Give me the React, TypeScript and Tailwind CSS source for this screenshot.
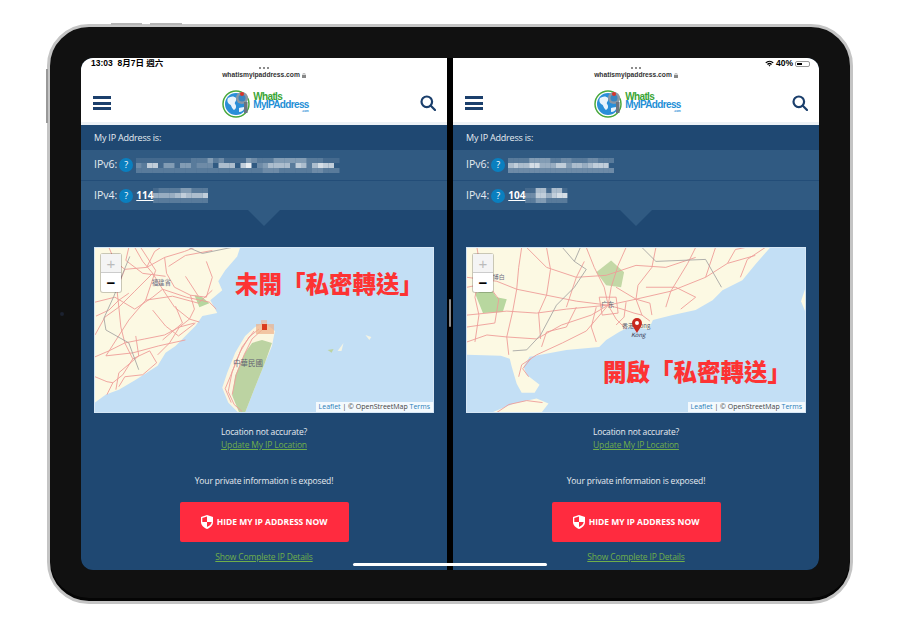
const CJK = '"Noto Sans CJK TC", "Noto Sans", sans-serif'

const LEFT_ROADS = [
  '0,55 20,50 40,62 58,50 68,42 92,50 115,55 122,62',
  '40,0 48,14 58,26 68,42 80,60 95,72 105,75',
  '14,0 20,14 30,22 52,20 70,10 90,4 100,0',
  '0,110 14,104 30,96 50,92 70,88 85,80 100,76',
  '30,22 22,42 24,60 26,80 30,96 38,112 55,104',
  '70,10 72,26 80,40 96,48 112,50',
  '58,26 40,44 24,60 10,70 0,88',
  '38,112 28,128 18,136 12,148',
  '55,104 62,116 48,128 30,130 24,140',
  '96,48 100,62 95,72 85,80 75,96 63,108',
  '0,130 12,135 18,136',
  '112,14 118,30 112,50',
  '52,20 60,4 66,0',
  '46,0 61,23 51,53 34,73 11,109',
  '74,19 91,8 118,3',
  '51,53 78,49 104,56 118,43',
  '11,109 38,106 64,99 91,93',
  '41,89 44,109 24,126 21,143',
  '58,63 71,79 84,89 101,76',
  '81,59 88,76 68,93',
  '1,69 14,63 24,53 34,46',
  '34,0 31,13 48,26 71,29',
  '91,29 104,49',
  '165,82 155,90 146,105 138,125 134,145 140,158 148,165',
  '169,82 158,92 150,108 142,128 138,148',
  '160,84 148,100 136,130 131,142 137,156',
]

const RIGHT_ROADS = [
  '0,30 30,34 50,42 80,48 110,54 142,58 170,52 205,44 240,30 262,16 290,8',
  '0,68 40,64 70,66 100,62 142,58',
  '55,0 52,20 50,42 46,64 40,90 42,108',
  '120,0 128,20 138,40 142,58 150,72 160,82',
  '160,0 152,18 145,40 142,58',
  '190,0 186,20 172,38 170,52 176,68 184,74',
  '230,0 222,16 205,44 200,60',
  '0,95 20,88 40,90 70,92 95,78 125,68 142,58',
  '142,58 120,84 96,96 70,108 55,118 52,130',
  '10,0 14,24 8,50 12,68 8,95',
  '80,0 84,22 80,48 72,66 74,92',
  '262,16 270,2 280,0',
  '150,40 170,52 184,56 186,68',
  '142,58 156,62 168,66 176,68',
  '30,166 42,158 60,154 76,156',
  '62,130 56,122 64,112',
  '100,60 110,30 118,14',
  '60,0 80,20 110,30 140,28 170,18 200,20 230,10',
  '0,40 20,36 32,52 28,76 0,80',
  '110,60 100,80 80,85 75,100',
  '130,60 125,80 130,95',
  '160,55 158,70 150,78',
  '180,40 210,40 230,50 215,62',
  '250,0 240,30',
  '300,0 282,12 275,30',
  '133,50 150,50 152,66 136,68 133,50',
]

const LEFT_MASK = [
  '1111111111222423111143222444444222111',
  '3277144144233306660790346666276268770',
  '2222222222222222222222233322222233222',
]
const RIGHT_MASK = [
  '22224444223322233222',
  '67668855577466567770',
  '33333333333333333333',
]
const V4_LEFT = ['1222244222', '5555676667', '2222222222']
const V4_RIGHT = ['11661661', '33775788', '22442222']

function Mask({ rows, cell }: { rows: string[]; cell: number }) {
  return (
    <svg width={rows[0].length * cell} height={15} className="block blur-[0.4px]">
      {rows.map((row, y) =>
        row.split('').map((v, x) => (
          <rect key={`${x}-${y}`} x={x * cell} y={y * 5} width={cell} height={5} fill="#fff" opacity={Number(v) / 10} />
        )),
      )}
    </svg>
  )
}

function Roads({ roads }: { roads: string[] }) {
  return (
    <g fill="none" stroke="#ee9d98" strokeWidth="0.9">
      {roads.map((r) => (
        <polyline key={r} points={r} />
      ))}
    </g>
  )
}

function TaiwanMap() {
  return (
    <svg viewBox="0 0 340 166" preserveAspectRatio="xMidYMid slice" className="block h-full w-full">
      <rect width="340" height="166" fill="#c3dff5" />
      <polygon points="0,0 146,0 143,9 131,23 124,34 128,43 116,53 123,66 108,69 101,79 91,89 81,99 71,106 63,119 41,133 24,143 11,148 0,156" fill="#fcf9e3" />
      <polygon points="171,76 181,84 178,99 171,116 164,133 151,166 144,166 134,156 128,141 133,126 141,106 151,89 161,80" fill="#fbf6e0" />
      <polygon points="168,93 178,96 171,116 164,133 151,166 145,166 138,149 141,129 151,106 158,96" fill="#bcd3a2" />
      <polygon points="100,48 108,50 115,56 105,60" fill="#b7d7a0" />
      <polygon points="234,103 240,102 238,106" fill="#bcd3a2" />
      <polygon points="244,104 250,96 248,104" fill="#f4f4e4" />
      <polygon points="272,88 278,90 276,93" fill="#f4f4e4" />
      <Roads roads={LEFT_ROADS} />
      <polyline points="35,9 28,26 19,49 9,71 11,83 34,96 44,123" fill="none" stroke="#9d9d9d" strokeWidth="0.8" />
      <polyline points="94,0 108,6 137,0" fill="none" stroke="#9d9d9d" strokeWidth="0.8" />
      <rect x="162" y="77" width="18" height="10" fill="#eeb189" opacity="0.7" />
      <rect x="167" y="73" width="6" height="5" fill="#e9b9a0" opacity="0.7" />
      <rect x="168" y="77" width="5" height="6" fill="#db3a1e" />
      <text x="57" y="38" fontSize="6.5" fill="#6b6b80" fontFamily={CJK}>福建省</text>
      <text x="139" y="119" fontSize="7.5" fill="#5f5f70" fontFamily={CJK}>中華民國</text>
    </svg>
  )
}

function HongKongMap() {
  return (
    <svg viewBox="0 0 340 166" preserveAspectRatio="xMidYMid slice" className="block h-full w-full">
      <rect width="340" height="166" fill="#c3dff5" />
      <polygon points="0,0 305,0 290,17 277,33 257,43 247,53 230,63 207,68 187,73 183,82 163,80 153,85 140,93 133,100 100,103 63,110 57,120 60,128 73,138 68,146 55,146 50,137 45,120 43,112 34,109 0,108" fill="#fcf9e3" />
      <polygon points="25,166 47,157 70,152 82,157 75,166" fill="#fcf9e3" />
      <polygon points="340,42 336,54 340,64" fill="#fcf9e3" />
      <polygon points="130,25 145,13 158,25 155,40 140,38" fill="#c3d8a6" />
      <polygon points="8,46 24,42 30,50 40,52 36,65 16,66" fill="#b8d79f" />
      <Roads roads={RIGHT_ROADS} />
      <polyline points="96,0 108,14 114,0" fill="none" stroke="#9d9d9d" strokeWidth="0.8" />
      <polyline points="108,14 120,22 108,40 90,58 74,88 60,103 46,104" fill="none" stroke="#9d9d9d" strokeWidth="0.8" />
      <polyline points="176,0 190,14 240,12 256,40" fill="none" stroke="#9d9d9d" strokeWidth="0.8" />
      <text x="135" y="60" fontSize="6.5" fill="#5f5f70" fontFamily={CJK}>广东</text>
      <text x="156" y="81" fontSize="6" fill="#55556a" fontFamily={CJK}>香港 Hong</text>
      <text x="165" y="90" fontSize="6" fontStyle="italic" fill="#333350" fontFamily={CJK}>Kong</text>
      <text x="26" y="32" fontSize="6" fill="#6b6b80" fontFamily={CJK}>博白</text>
      <path d="M171 86c-3-5-5-7-5-10a5 5 0 0 1 10 0c0 3-2 5-5 10z" fill="#c8281e" />
      <circle cx="171" cy="76" r="2" fill="#fff" />
    </svg>
  )
}

function Logo() {
  return (
    <div className="flex h-[29px] items-center gap-[2px]">
      <svg width="29" height="29" viewBox="0 0 29 29">
        <circle cx="14" cy="15" r="13" fill="#fff" stroke="#4aa83c" strokeWidth="1.5" />
        <circle cx="14" cy="15" r="11" fill="#2a8fd8" />
        <path d="M6 9c3-2 6-2 8 0 1 3-2 4-1 6 2 2 1 5-1 6-3-2-2-5-5-6-2-2-2-4-1-6zM17 19c3-1 5-1 6-1-1 3-3 5-6 5z" fill="#e8f3fb" />
        <circle cx="20" cy="9" r="6" fill="#8a97a5" />
        <circle cx="20" cy="9" r="3.500" fill="#3a86c0" />
        <rect x="22" y="13" width="3.500" height="11" fill="#6b7480" />
        <circle cx="20" cy="5" r="2" fill="#d8352a" />
      </svg>
      <div className="flex flex-col font-['Liberation_Sans'] text-[10px] font-bold leading-[8px] tracking-[-0.65px]">
        <span className="text-[#3aa535]">WhatIs</span>
        <span className="text-[#1f8fd6]">MyIPAddress</span>
        <span className="self-end text-[3px] leading-[4px] tracking-normal text-[#1f8fd6]">.com</span>
      </div>
    </div>
  )
}

function Shield() {
  return (
    <svg width="12" height="14" viewBox="0 0 12 14">
      <path d="M6 0 12 2v5c0 3.400-2.600 5.700-6 7-3.400-1.300-6-3.600-6-7V2z" fill="#fff" />
      <path d="M6 1.500v5.500H1.300V3zM6 7h4.700c-.3 2.300-2.200 3.900-4.700 5z" fill="#ff2b3f" />
    </svg>
  )
}

interface PaneProps {
  ip: string
  v6: string[]
  v4: string[]
  cell: number
  left?: boolean
  note: string
  noteClass: string
  map: React.ReactNode
}

function Pane({ ip, v6, v4, cell, left, note, noteClass, map }: PaneProps) {
  return (
    <div className="flex h-full flex-1 flex-col bg-[#1f4872] font-['Open_Sans'] text-[#e6ebf1]">
      <div className="bg-white">
        <div className="relative h-[26px] text-black">
          <div className="flex h-[10px] items-center justify-center gap-[2px] pt-[9px]">
            <span className="h-[2px] w-[2px] rounded-full bg-[#666]" />
            <span className="h-[2px] w-[2px] rounded-full bg-[#666]" />
            <span className="h-[2px] w-[2px] rounded-full bg-[#666]" />
          </div>
          <div className="mt-[2px] flex items-center justify-center gap-[2px] font-['Liberation_Sans'] text-[6.700px] font-bold leading-[10px] text-[#333]">
            whatismyipaddress.com
            <svg width="4" height="5" viewBox="0 0 4 5"><rect y="2" width="4" height="3" fill="#888" /><path d="M1 2V1a1 1 0 0 1 2 0v1" fill="none" stroke="#888" strokeWidth="0.6" /></svg>
          </div>
          {left ? (
            <span className="absolute left-[10px] top-0 text-[8.500px] font-bold leading-[11px]" style={{ fontFamily: `"Liberation Sans", ${CJK}` }}>
              13:03&nbsp;&nbsp;8月7日 週六
            </span>
          ) : (
            <div className="absolute right-[9px] top-0 flex h-[11px] items-center gap-[2px] font-['Liberation_Sans'] text-[8.500px] font-bold">
              <svg width="9" height="7" viewBox="0 0 9 7">
                <path d="M.3 2.400a6 6 0 0 1 8.400 0l-.9.9a4.800 4.800 0 0 0-6.600 0zM2 4a3.600 3.600 0 0 1 5 0l-.9.9a2.300 2.300 0 0 0-3.200 0zM3.500 5.400a1.400 1.400 0 0 1 2 0l-1 1.100z" fill="#000" />
              </svg>
              40%
              <div className="flex h-[6px] w-[15px] items-center rounded-[2px] border border-[#999] p-[1px]">
                <div className="h-full w-[5px] bg-black" />
              </div>
            </div>
          )}
        </div>
        <div className="flex h-[38px] items-center justify-between pl-[12px] pr-[11px]">
          <div className="flex w-[18px] flex-col gap-[2.500px]">
            <div className="h-[3px] bg-[#1b3f6c]" />
            <div className="h-[3px] bg-[#1b3f6c]" />
            <div className="h-[3px] bg-[#1b3f6c]" />
          </div>
          <Logo />
          <svg width="16" height="16" viewBox="0 0 16 16" fill="none" stroke="#1b3f6c" strokeWidth="2.200">
            <circle cx="6.800" cy="6.800" r="5.300" />
            <path d="m10.800 10.800 4.200 4.200" strokeLinecap="round" />
          </svg>
        </div>
        <div className="h-[3px] bg-[#eef2f6]" />
      </div>
      <div className="flex h-[25px] items-center px-[13px] text-[9px] tracking-[-0.2px]">My IP Address is:</div>
      <div className="flex h-[31px] items-center border-b border-[#234d78] bg-[#305a82] px-[13px] text-[10.500px]">
        <span>IPv6:</span>
        <span className="ml-[2px] flex h-[14px] w-[14px] items-center justify-center rounded-full bg-[#0a7fbf] text-[9px] text-white">?</span>
        <div className="ml-[3px]">
          <Mask rows={v6} cell={cell} />
        </div>
      </div>
      <div className="flex h-[29px] items-center bg-[#305a82] px-[13px] text-[10.500px]">
        <span>IPv4:</span>
        <span className="ml-[2px] flex h-[14px] w-[14px] items-center justify-center rounded-full bg-[#0a7fbf] text-[9px] text-white">?</span>
        <span className="ml-[3px] text-[10px] font-bold text-white underline">{ip}</span>
        <Mask rows={v4} cell={cell} />
      </div>
      <div className="mx-auto h-0 w-0 border-x-[16px] border-t-[16px] border-x-transparent border-t-[#305a82]" />
      <div className="relative mx-[13px] mt-[21px] h-[166px] overflow-hidden border border-[#d5e6f5]">
        {map}
        <div className="absolute left-[6px] top-[6px] flex w-[20px] flex-col rounded-[2px] bg-white font-['Liberation_Sans'] shadow-[0_0_0_1px_rgba(0,0,0,0.2)]">
          <div className="flex h-[19px] items-center justify-center border-b border-[#ccc] bg-[#f4f4f4] text-[15px] leading-none text-[#bbb]">+</div>
          <div className="flex h-[19px] items-center justify-center text-[15px] font-bold leading-none text-black">−</div>
        </div>
        <span className={`absolute whitespace-nowrap text-[23.500px] font-black leading-none text-[#fd3333] ${noteClass}`} style={{ fontFamily: CJK }}>
          {note}
        </span>
        <div className="absolute bottom-0 right-0 bg-white/80 px-[3px] font-['Open_Sans'] text-[7px] leading-[10px] text-[#444]">
          <span className="text-[#2a80b9]">Leaflet</span> | © OpenStreetMap <span className="text-[#2a80b9]">Terms</span>
        </div>
      </div>
      <div className="mt-[12px] text-center text-[8.500px] leading-[13px] tracking-[-0.15px]">
        <p>Location not accurate?</p>
        <p className="text-[#6fae4b] underline">Update My IP Location</p>
      </div>
      <p className="mt-[23px] text-center text-[8.500px] leading-[13px] tracking-[-0.15px]">Your private information is exposed!</p>
      <div className="mt-[15px] flex justify-center">
        <div className="flex h-[40px] w-[169px] items-center justify-center gap-[4px] rounded-[2px] bg-[#ff2b3f] text-[8.500px] font-bold text-white">
          <Shield />
          HIDE MY IP ADDRESS NOW
        </div>
      </div>
      <p className="mt-[8px] text-center text-[8.500px] leading-[13px] tracking-[-0.15px] text-[#6fae4b] underline">Show Complete IP Details</p>
    </div>
  )
}

export default function App() {
  return (
    <div className="h-[627px] w-[900px] overflow-hidden bg-white pl-[47px] pt-[24px]">
      <div className="relative h-[580px] w-[806px] rounded-[42px] border-[3px] border-[#c4c4c4] bg-[#111] pb-[30px] pl-[31px] pr-[31px] pt-[31px] shadow-[inset_0_-3px_0_#050505]">
        <div className="absolute left-[61px] top-[-4px] h-[2px] w-[31px] bg-[#b5b5b5]" />
        <div className="absolute left-[100px] top-[-4px] h-[2px] w-[32px] bg-[#b5b5b5]" />
        <div className="absolute left-[-4px] top-[42px] h-[54px] w-[2px] bg-[#999]" />
        <div className="absolute left-[10px] top-[285px] h-[4px] w-[4px] rounded-full bg-[#1c2230]" />
        <div className="relative flex h-[512px] gap-[6px] overflow-hidden rounded-[12px] bg-black">
          <Pane ip="114" v6={LEFT_MASK} v4={V4_LEFT} cell={5.5} left note="未開「私密轉送」" noteClass="left-[140px] top-[24px]" map={<TaiwanMap />} />
          <Pane ip="104" v6={RIGHT_MASK} v4={V4_RIGHT} cell={5.3} note="開啟「私密轉送」" noteClass="left-[136px] top-[112px]" map={<HongKongMap />} />
          <div className="absolute left-[368px] top-[241px] h-[28px] w-[2px] rounded-full bg-[#8a8a8a]" />
          <div className="absolute bottom-[4px] left-[272px] h-[3px] w-[194px] rounded-full bg-white" />
        </div>
      </div>
    </div>
  )
}
